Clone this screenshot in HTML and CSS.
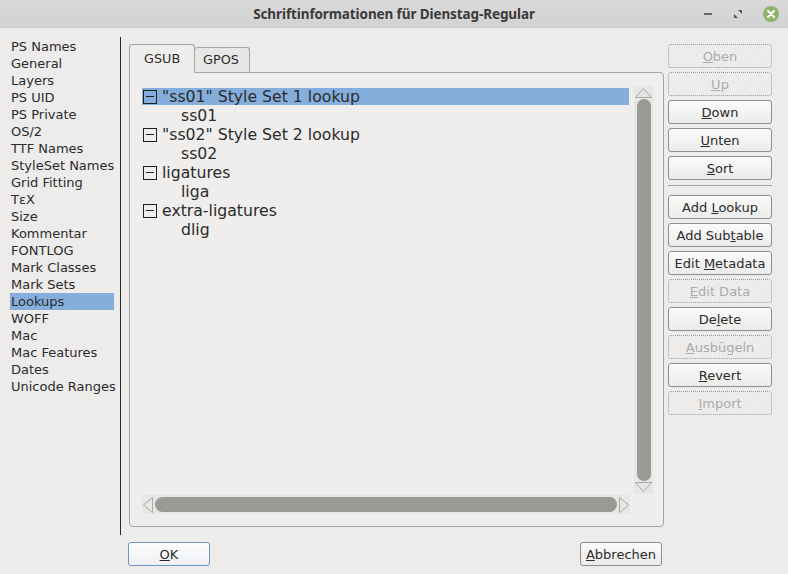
FILE: index.html
```html
<!DOCTYPE html>
<html>
<head>
<meta charset="utf-8">
<link rel="stylesheet" href="styles.css">
</head>
<body>
<div class="window">
  <div class="titlebar">
    <div class="title">Schriftinformationen für Dienstag-Regular</div>
    <div class="wm">
      <span class="wm-min"></span>
      <svg class="wm-max" width="10" height="10" viewBox="0 0 10 10"><path d="M5 1h4v4zM1 5v4h4z" fill="#555"/></svg>
      <span class="wm-close"><svg width="16" height="16" viewBox="0 0 16 16"><circle cx="8" cy="8" r="8" fill="#8db26a"/><path d="M5 5l6 6M11 5l-6 6" stroke="#fff" stroke-width="2" stroke-linecap="round"/></svg></span>
    </div>
  </div>
  <div class="main">
    <ul class="sidelist">
      <li>PS Names</li>
      <li>General</li>
      <li>Layers</li>
      <li>PS UID</li>
      <li>PS Private</li>
      <li>OS/2</li>
      <li>TTF Names</li>
      <li>StyleSet Names</li>
      <li>Grid Fitting</li>
      <li>TεX</li>
      <li>Size</li>
      <li>Kommentar</li>
      <li>FONTLOG</li>
      <li>Mark Classes</li>
      <li>Mark Sets</li>
      <li class="sel">Lookups</li>
      <li>WOFF</li>
      <li>Mac</li>
      <li>Mac Features</li>
      <li>Dates</li>
      <li>Unicode Ranges</li>
    </ul>
    <div class="tabarea">
      <div class="tabs">
        <div class="tab active">GSUB</div>
        <div class="tab">GPOS</div>
      </div>
      <div class="panel">
        <div class="treewrap">
          <div class="tree">
            <div class="row sel"><span class="exp"></span>"ss01" Style Set 1 lookup</div>
            <div class="row child">ss01</div>
            <div class="row"><span class="exp"></span>"ss02" Style Set 2 lookup</div>
            <div class="row child">ss02</div>
            <div class="row"><span class="exp"></span>ligatures</div>
            <div class="row child">liga</div>
            <div class="row"><span class="exp"></span>extra-ligatures</div>
            <div class="row child">dlig</div>
          </div>
          <div class="vscroll">
            <svg class="arr" width="19" height="12" viewBox="0 0 19 12"><path d="M1.5 11.5L9.5 2.5L17.5 11.5Z" fill="none" stroke="#a9a9a6"/></svg>
            <div class="vthumb"></div>
            <svg class="arr" width="19" height="12" viewBox="0 0 19 12"><path d="M1.5 0.5L9.5 9.5L17.5 0.5Z" fill="none" stroke="#a9a9a6"/></svg>
          </div>
        </div>
        <div class="hrow">
          <div class="hscroll">
            <svg class="arr" width="12" height="18" viewBox="0 0 12 18"><path d="M10.5 1.5L1.5 9L10.5 16.5Z" fill="none" stroke="#a9a9a6"/></svg>
            <div class="hthumb"></div>
            <svg class="arr" width="12" height="18" viewBox="0 0 12 18"><path d="M1.5 1.5L10.5 9L1.5 16.5Z" fill="none" stroke="#a9a9a6"/></svg>
          </div>
          <div class="corner"></div>
        </div>
      </div>
    </div>
    <div class="buttons">
      <button class="btn dis"><u>O</u>ben</button>
      <button class="btn dis"><u>U</u>p</button>
      <button class="btn"><u>D</u>own</button>
      <button class="btn"><u>U</u>nten</button>
      <button class="btn"><u>S</u>ort</button>
      <div class="sep"></div>
      <button class="btn">Add <u>L</u>ookup</button>
      <button class="btn">Add Sub<u>t</u>able</button>
      <button class="btn">Edit <u>M</u>etadata</button>
      <button class="btn dis"><u>E</u>dit Data</button>
      <button class="btn">De<u>l</u>ete</button>
      <button class="btn dis"><u>A</u>usbügeln</button>
      <button class="btn"><u>R</u>evert</button>
      <button class="btn dis"><u>I</u>mport</button>
    </div>
  </div>
  <div class="footer">
    <button class="btn ok"><u>O</u>K</button>
    <button class="btn cancel"><u>A</u>bbrechen</button>
  </div>
</div>
</body>
</html>
```

FILE: styles.css
```css
* { box-sizing: border-box; }
html, body { margin: 0; padding: 0; }
body {
  width: 788px;
  height: 574px;
  overflow: hidden;
  background: #edeceb;
  font-family: "DejaVu Sans", sans-serif;
  color: #2e2e2e;
}
.window { width: 788px; height: 574px; display: flex; flex-direction: column; }
.titlebar {
  height: 28px;
  flex: none;
  background: linear-gradient(#dadada, #d2d2d2);
  border-bottom: 1px solid #c8c8c8;
  display: flex;
  align-items: center;
  justify-content: center;
  position: relative;
}
.title {
  font-family: "Noto Sans", "Open Sans", sans-serif;
  font-weight: bold;
  font-size: 13.5px;
  color: #3a3a3a;
  letter-spacing: -0.1px;
}
.wm {
  position: absolute;
  right: 9px;
  top: 6px;
  display: flex;
  align-items: center;
  gap: 0;
}
.wm-min { width: 8px; height: 2px; background: #666; margin-right: 21px; }
.wm-max { margin-right: 20px; }
.wm-close { display: block; width: 16px; height: 16px; }
.wm-close svg { display: block; }

.main {
  flex: 1;
  display: flex;
  align-items: flex-start;
  padding-top: 9px;
}
.sidelist {
  list-style: none;
  margin: 0;
  padding: 1px 6px 0 10px;
  width: 121px;
  height: 498px;
  flex: none;
  border-right: 1px solid #2a2a2a;
  font-size: 13px;
  line-height: 17px;
  color: #2b2b2b;
}
.sidelist li { padding-left: 1px; white-space: nowrap; }
.sidelist li.sel { background: #86aedc; }

.tabarea {
  margin-left: 8px;
  margin-top: 7px;
  width: 535px;
  flex: none;
  display: flex;
  flex-direction: column;
}
.tabs { display: flex; align-items: flex-end; height: 28px; position: relative; z-index: 1; }
.tab {
  font-size: 12.8px;
  color: #2b2b2b;
  border: 1px solid #a5a5a3;
  border-bottom: none;
  border-radius: 3px 3px 0 0;
  padding: 0 8px 0 8px;
  height: 25px;
  line-height: 24px;
  background: #e8e7e6;
}
.tab.active {
  height: 29px;
  line-height: 28px;
  background: #efeeed;
  width: 66px;
  padding-left: 14px;
  margin-bottom: -1px;
}
.tab:not(.active) { border-left: none; width: 55px; }
.panel {
  height: 455px;
  border: 1px solid #a5a5a3;
  border-radius: 0 4px 4px 4px;
  background: #efeeed;
  padding: 13px 10px 0 12px;
  display: flex;
  flex-direction: column;
}
.treewrap { display: flex; height: 408px; }
.tree {
  flex: 1;
  padding-top: 1px;
  font-size: 15.7px;
  line-height: 19px;
  color: #2b2b2b;
}
.row { display: flex; align-items: center; height: 19px; white-space: nowrap; }
.row.sel { background: #86aedc; margin-right: 5px; height: 17px; margin-top: 1px; margin-bottom: 1px; }
.row.child { padding-left: 39px; }
.exp {
  width: 14px;
  height: 14px;
  border: 1px solid #1e1e1e;
  margin-left: 1px;
  margin-right: 5px;
  position: relative;
  flex: none;
}
.exp::after {
  content: "";
  position: absolute;
  left: 2px;
  right: 2px;
  top: 5px;
  height: 1px;
  background: #1e1e1e;
}
.vscroll {
  width: 19px;
  flex: none;
  background: #e7e6e4;
  display: flex;
  flex-direction: column;
  align-items: center;
}
.arr { display: block; flex: none; }
.vthumb {
  width: 14px;
  flex: 1;
  margin: 1px 0;
  background: #999995;
  border-radius: 7px;
}
.hrow { display: flex; height: 19px; margin-top: 1px; }
.hscroll {
  width: 488px;
  flex: none;
  background: #e7e6e4;
  display: flex;
  align-items: center;
}
.hthumb {
  flex: 1;
  height: 15px;
  margin: 0 1px;
  background: #999995;
  border-radius: 8px;
}
.corner { flex: 1; }

.buttons {
  margin-left: 4px;
  width: 104px;
  flex: none;
  display: flex;
  flex-direction: column;
  gap: 4px;
  padding-top: 7px;
}
.btn {
  font-family: "DejaVu Sans", sans-serif;
  font-size: 13px;
  color: #2b2b2b;
  height: 24px;
  padding: 0;
  border: 1px solid #8e8e8c;
  border-radius: 3px;
  background: linear-gradient(#fbfbfb, #ecebea);
  white-space: nowrap;
}
.btn.dis {
  color: #ababab;
  border: 1px dotted #9a9a98;
  background: repeating-linear-gradient(135deg, #efeeed 0 2px, #e9e8e7 2px 3px);
}
.sep { height: 1px; background: #a5a5a3; margin: 1px 0 5px; }

.footer {
  height: 37px;
  flex: none;
  display: flex;
  align-items: flex-start;
  padding-left: 128px;
  padding-top: 5px;
}
.btn.ok {
  width: 82px;
  height: 24px;
  border-color: #6f94c8;
  background: linear-gradient(#fdfdfd, #eef0f4);
}
.btn.cancel {
  width: 82px;
  height: 24px;
  margin-left: 370px;
}
```
